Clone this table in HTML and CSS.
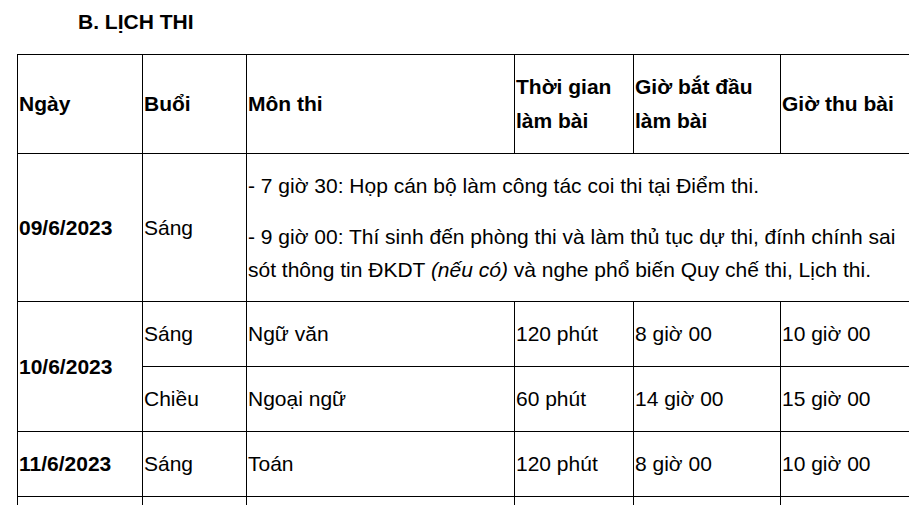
FILE: index.html
```html
<!DOCTYPE html>
<html lang="vi">
<head>
<meta charset="utf-8">
<title>Lịch thi</title>
<link rel="stylesheet" href="styles.css">
</head>
<body>
<div class="page">
  <h2 class="title">B. LỊCH THI</h2>
  <table class="schedule">
    <colgroup>
      <col class="c-date">
      <col class="c-session">
      <col class="c-subject">
      <col class="c-duration">
      <col class="c-start">
      <col class="c-end">
    </colgroup>
    <tr class="head">
      <th>Ngày</th>
      <th>Buổi</th>
      <th>Môn thi</th>
      <th>Thời gian làm bài</th>
      <th>Giờ bắt đầu làm bài</th>
      <th>Giờ thu bài</th>
    </tr>
    <tr class="intro">
      <td class="date">09/6/2023</td>
      <td>Sáng</td>
      <td colspan="4" class="notes">
        <p>- 7 giờ 30: Họp cán bộ làm công tác coi thi tại Điểm thi.</p>
        <p>- 9 giờ 00: Thí sinh đến phòng thi và làm thủ tục dự thi, đính chính sai sót thông tin ĐKDT <em>(nếu có)</em> và nghe phổ biến Quy chế thi, Lịch thi.</p>
      </td>
    </tr>
    <tr class="exam">
      <td class="date" rowspan="2">10/6/2023</td>
      <td>Sáng</td>
      <td>Ngữ văn</td>
      <td>120 phút</td>
      <td>8 giờ 00</td>
      <td>10 giờ 00</td>
    </tr>
    <tr class="exam">
      <td>Chiều</td>
      <td>Ngoại ngữ</td>
      <td>60 phút</td>
      <td>14 giờ 00</td>
      <td>15 giờ 00</td>
    </tr>
    <tr class="exam">
      <td class="date">11/6/2023</td>
      <td>Sáng</td>
      <td>Toán</td>
      <td>120 phút</td>
      <td>8 giờ 00</td>
      <td>10 giờ 00</td>
    </tr>
    <tr class="exam">
      <td class="date"></td>
      <td></td>
      <td></td>
      <td></td>
      <td></td>
      <td></td>
    </tr>
  </table>
</div>
</body>
</html>
```
FILE: styles.css
```css
html, body {
  margin: 0;
  padding: 0;
  overflow: hidden;
  background: #fff;
}
.page {
  width: 909px;
  height: 505px;
  overflow: hidden;
  font-family: "Liberation Sans", Arial, sans-serif;
  color: #000;
  font-size: 21px;
}
.title {
  margin: 0;
  padding: 10px 0 0 78px;
  height: 54px;
  box-sizing: border-box;
  font-size: 21px;
  font-weight: bold;
  line-height: 24px;
}
.schedule {
  margin-left: 17px;
  border-collapse: collapse;
  table-layout: fixed;
  width: 910px;
}
.c-date { width: 125px; }
.c-session { width: 104px; }
.c-subject { width: 268px; }
.c-duration { width: 119px; }
.c-start { width: 147px; }
.c-end { width: 147px; }
.schedule th,
.schedule td {
  border: 1.5px solid #000;
  padding: 0 2px 0 1px;
  text-align: left;
  vertical-align: middle;
  line-height: 34px;
  font-size: 21px;
}
.schedule th { font-weight: bold; }
.head { height: 99px; }
.intro { height: 148px; }
.exam { height: 65px; }
.date { font-weight: bold; }
.notes p {
  margin: 0;
  line-height: 33px;
}
.notes p + p { margin-top: 18px; }
```
